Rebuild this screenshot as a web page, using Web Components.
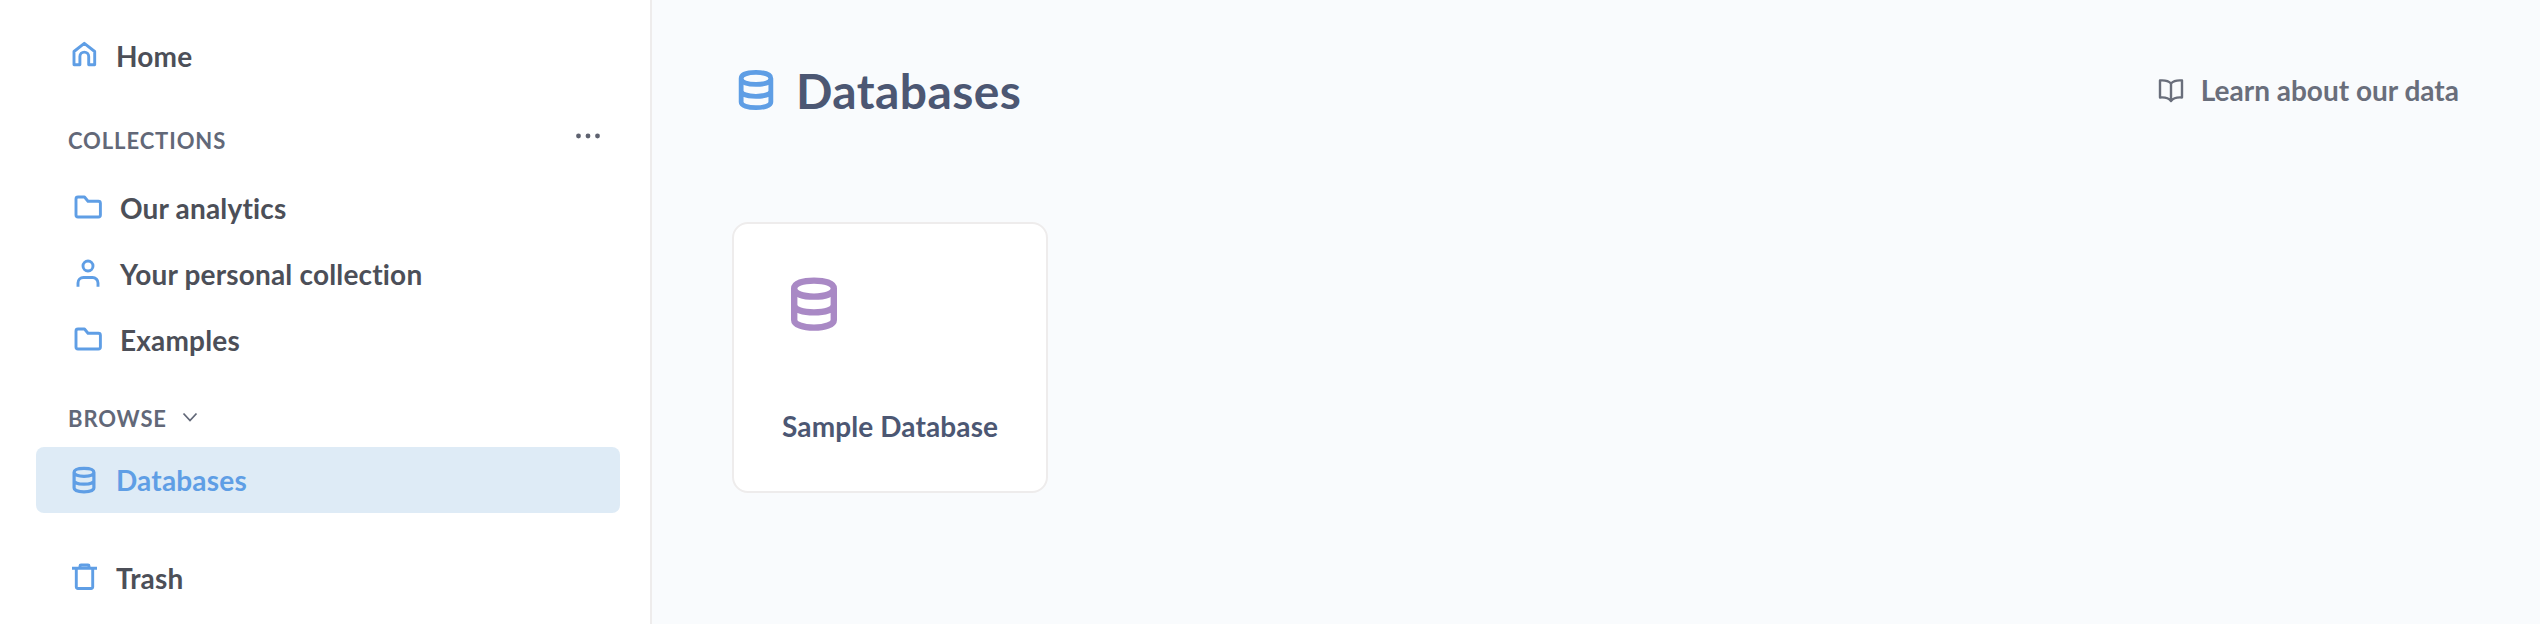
<!DOCTYPE html>
<html>
<head>
<meta charset="utf-8">
<style>
  html, body { margin: 0; height: 100%; }
  body { font-family: Lato, "Noto Sans", sans-serif; font-variant-ligatures: none; }
</style>
</head>
<body>
<app-shell>
  <side-bar slot="side">
    <nav-item icon="home" style="margin-top:23px">Home</nav-item>
    <section-head more style="margin-top:36px">COLLECTIONS</section-head>
    <nav-item icon="folder" nested style="margin-top:20px">Our analytics</nav-item>
    <nav-item icon="person" nested>Your personal collection</nav-item>
    <nav-item icon="folder" nested>Examples</nav-item>
    <section-head chevron style="margin-top:30px">BROWSE</section-head>
    <nav-item icon="database" active style="margin-top:14px">Databases</nav-item>
    <nav-item icon="trash" style="margin-top:32px">Trash</nav-item>
  </side-bar>
  <page-main slot="main">
    <page-header>Databases</page-header>
    <db-card>Sample Database</db-card>
  </page-main>
</app-shell>

<script>
const ICONS = {
  home: '<path d="M6 24.7V11.5L16.3 3.300 26.700 11.500V24.700H20.700V16.500a4.400 4.400 0 0 0-8.800 0V24.700Z"/>',
  folder: '<path d="M4 7a2 2 0 0 1 2-2h6.500l3.500 4.200H26.400a2 2 0 0 1 2 2V23a2 2 0 0 1-2 2H6a2 2 0 0 1-2-2Z"/>',
  person: '<circle cx="16" cy="8" r="5"/><path d="M6 28.700V25a5.500 5.500 0 0 1 5.500-5.500h9a5.500 5.500 0 0 1 5.500 5.500V28.700"/>',
  database: '<path d="M6.100 8.300C6.100 5.600 10.500 4.300 16 4.300S25.900 5.600 25.900 8.300 21.500 12.300 16 12.300 6.100 11 6.100 8.300ZM6.100 8.300V24C6.100 26.300 10.500 27.800 16 27.800S25.900 26.300 25.900 24V8.300M6.100 16.500C6.100 18.900 10.500 20.200 16 20.200S25.900 18.900 25.900 16.500"/>',
  trash: '<path d="M4 6.300H29M12 6.300V4a1 1 0 0 1 1-1h7a1 1 0 0 1 1 1V6.300M8.300 6.300V25a1.500 1.500 0 0 0 1.500 1.500H23.200a1.500 1.500 0 0 0 1.500-1.500V6.300"/>'
};

function icon(name, size) {
  const sw = name === 'database' ? 3.2 : 2.9;
  return `<svg width="${size}" height="${size}" viewBox="0 0 32 32" fill="none" stroke="currentColor" stroke-width="${sw}" stroke-linejoin="round">${ICONS[name]}</svg>`;
}

class AppShell extends HTMLElement {
  constructor() {
    super();
    this.attachShadow({ mode: 'open' });
    this.shadowRoot.innerHTML = `
      <style>
        :host { display: flex; height: 100vh; overflow: hidden; }
        .side { flex: 0 0 652px; box-sizing: border-box; background: #fff; border-right: 2px solid #eeecec; }
        .main { flex: 1; background: #f9fbfd; }
      </style>
      <div class="side"><slot name="side"></slot></div>
      <div class="main"><slot name="main"></slot></div>
    `;
  }
}

class SideBar extends HTMLElement {
  constructor() {
    super();
    this.attachShadow({ mode: 'open' });
    this.shadowRoot.innerHTML = `
      <style>
        :host { display: flex; flex-direction: column; padding: 0 30px 0 36px; }
      </style>
      <slot></slot>
    `;
  }
}

class NavItem extends HTMLElement {
  constructor() {
    super();
    this.attachShadow({ mode: 'open' });
    const nested = this.hasAttribute('nested');
    this.shadowRoot.innerHTML = `
      <style>
        :host { display: flex; align-items: center; height: 66px; box-sizing: border-box;
          padding-left: ${nested ? 36 : 32}px; gap: 16px; border-radius: 8px;
          font-size: 28px; font-weight: 700; letter-spacing: 0.18px; color: #4c4f58; }
        :host([active]) { background: #deebf6; color: #5f9ee5; }
        .i { display: flex; color: #5f9ee5; }
      </style>
      <span class="i">${icon(this.getAttribute('icon'), 32)}</span>
      <slot></slot>
    `;
  }
}

class SectionHead extends HTMLElement {
  constructor() {
    super();
    this.attachShadow({ mode: 'open' });
    const more = this.hasAttribute('more')
      ? `<svg class="more" width="26" height="8" viewBox="0 0 26 8" fill="currentColor"><circle cx="3.500" cy="4" r="2.400"/><circle cx="13" cy="4" r="2.400"/><circle cx="22.500" cy="4" r="2.400"/></svg>` : '';
    const chev = this.hasAttribute('chevron')
      ? `<svg class="chev" width="16" height="10" viewBox="0 0 16 10" fill="none" stroke="currentColor" stroke-width="1.800"><path d="M1.500 1.500 8 8.500 14.500 1.500"/></svg>` : '';
    this.shadowRoot.innerHTML = `
      <style>
        :host { display: flex; align-items: center; height: 30px; padding-left: 32px; padding-right: 19px;
          font-size: 22px; font-weight: 700; letter-spacing: 0.9px; color: #626878; }
        .more { margin-left: auto; margin-top: -8px; color: #5e6270; }
        .chev { margin-left: 15px; margin-top: -2px; }
      </style>
      <slot></slot>${more}${chev}
    `;
  }
}

class PageMain extends HTMLElement {
  constructor() {
    super();
    this.attachShadow({ mode: 'open' });
    this.shadowRoot.innerHTML = `
      <style>
        :host { display: block; padding: 60px 32px 0 80px; }
      </style>
      <slot></slot>
    `;
  }
}

class PageHeader extends HTMLElement {
  constructor() {
    super();
    this.attachShadow({ mode: 'open' });
    this.shadowRoot.innerHTML = `
      <style>
        :host { display: flex; align-items: center; height: 60px; margin-bottom: 102px; }
        .db { display: flex; color: #5f9ee5; margin-right: 16px; }
        .title { font-size: 48px; font-weight: 700; letter-spacing: 0.4px; color: #4c5773; }
        .learn { margin-left: auto; display: flex; align-items: center; gap: 16px; margin-right: 49px;
          font-size: 28px; font-weight: 700; color: #696e7b; }
        .learn svg { display: block; }
      </style>
      <span class="db">${icon('database', 48)}</span>
      <span class="title"><slot></slot></span>
      <span class="learn">
        <svg width="28" height="28" viewBox="0 0 28 28" fill="none" stroke="currentColor" stroke-width="2.400" stroke-linejoin="round"><path d="M14 7.500C11.500 4.800 6.500 4.200 3 4.500V21.500C6.500 21.200 11.500 21.800 14 25 16.500 21.800 21.500 21.200 25 21.500V4.500C21.500 4.200 16.500 4.800 14 7.500ZM14 7.500V25"/></svg>
        Learn about our data
      </span>
    `;
  }
}

class DbCard extends HTMLElement {
  constructor() {
    super();
    this.attachShadow({ mode: 'open' });
    this.shadowRoot.innerHTML = `
      <style>
        :host { display: block; width: 316px; height: 271px; box-sizing: border-box; padding: 48px;
          background: #fff; border: 2px solid #eeecec; border-radius: 16px; }
        .i { display: block; height: 64px; color: #a989c5; margin-bottom: 73px; }
        .name { font-size: 28px; font-weight: 700; letter-spacing: 0.12px; color: #4c5773; white-space: nowrap; line-height: 34px; }
      </style>
      <span class="i">${icon('database', 64)}</span>
      <div class="name"><slot></slot></div>
    `;
  }
}

customElements.define('app-shell', AppShell);
customElements.define('side-bar', SideBar);
customElements.define('nav-item', NavItem);
customElements.define('section-head', SectionHead);
customElements.define('page-main', PageMain);
customElements.define('page-header', PageHeader);
customElements.define('db-card', DbCard);
</script>
</body>
</html>
